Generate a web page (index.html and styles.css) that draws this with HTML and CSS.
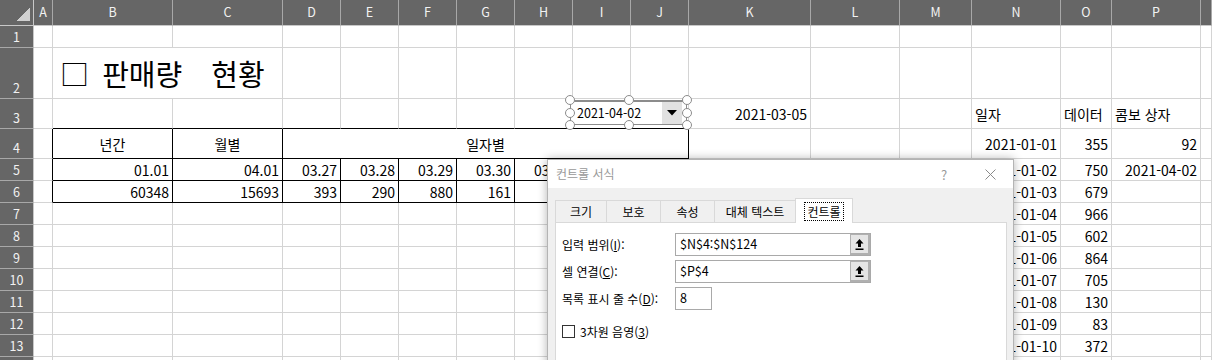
FILE: index.html
```html
<!DOCTYPE html>
<html lang="ko">
<head>
<meta charset="UTF-8">
<title>판매량 현황</title>
<link rel="stylesheet" href="styles.css">
</head>
<body>

<div class="sheet">
  <!-- 열 머리글 -->
  <div class="corner"></div>
  <div class="ch">A</div><div class="ch">B</div><div class="ch">C</div><div class="ch">D</div><div class="ch">E</div><div class="ch">F</div><div class="ch">G</div><div class="ch">H</div>
  <div class="ch">I</div><div class="ch">J</div><div class="ch">K</div><div class="ch">L</div><div class="ch">M</div><div class="ch">N</div><div class="ch">O</div><div class="ch">P</div><div class="ch"></div>

  <!-- 1 -->
  <div class="rh">1</div>
  <div></div><div></div><div></div><div></div><div></div><div></div><div></div><div></div><div></div><div></div><div></div><div></div><div></div><div></div><div></div><div></div><div></div>

  <!-- 2 -->
  <div class="rh">2</div>
  <div></div>
  <div class="title"><span><span class="title-box">□</span> 판매량 <span class="title-sub">현황</span></span></div>
  <div></div><div></div><div></div><div></div><div></div><div></div><div></div><div></div><div></div><div></div><div></div><div></div><div></div>
  <div></div>

  <!-- 3 -->
  <div class="rh">3</div>
  <div></div>
  <div class="tt"></div><div class="tt"></div><div class="tt"></div><div class="tt"></div><div class="tt"></div><div class="tt"></div><div class="tt"></div><div class="tt"></div><div class="tt"></div>
  <div class="r">2021-03-05</div>
  <div></div><div></div>
  <div>일자</div>
  <div>데이터</div>
  <div>콤보 상자</div>
  <div></div>

  <!-- 4 -->
  <div class="rh">4</div>
  <div class="tl"></div>
  <div class="tb c">년간</div>
  <div class="tb c">월별</div>
  <div class="tb c span7">일자별</div>
  <div></div><div></div><div></div>
  <div class="r">2021-01-01</div>
  <div class="r">355</div>
  <div class="r">92</div>
  <div></div>

  <!-- 5 -->
  <div class="rh">5</div>
  <div class="tl"></div>
  <div class="tb r">01.01</div>
  <div class="tb r">04.01</div>
  <div class="tb r">03.27</div>
  <div class="tb r">03.28</div>
  <div class="tb r">03.29</div>
  <div class="tb r">03.30</div>
  <div class="tb r">03.31</div>
  <div class="tb r"></div>
  <div class="tb r"></div>
  <div></div><div></div><div></div>
  <div class="r">2021-01-02</div>
  <div class="r">750</div>
  <div class="r">2021-04-02</div>
  <div></div>

  <!-- 6 -->
  <div class="rh">6</div>
  <div class="tl"></div>
  <div class="tb r">60348</div>
  <div class="tb r">15693</div>
  <div class="tb r">393</div>
  <div class="tb r">290</div>
  <div class="tb r">880</div>
  <div class="tb r">161</div>
  <div class="tb r"></div>
  <div class="tb r"></div>
  <div class="tb r"></div>
  <div></div><div></div><div></div>
  <div class="r">2021-01-03</div>
  <div class="r">679</div>
  <div></div>
  <div></div>

  <!-- 7 ~ 14 -->
  <div class="rh">7</div>
  <div></div><div></div><div></div><div></div><div></div><div></div><div></div><div></div><div></div><div></div><div></div><div></div><div></div>
  <div class="r">2021-01-04</div><div class="r">966</div><div></div><div></div>

  <div class="rh">8</div>
  <div></div><div></div><div></div><div></div><div></div><div></div><div></div><div></div><div></div><div></div><div></div><div></div><div></div>
  <div class="r">2021-01-05</div><div class="r">602</div><div></div><div></div>

  <div class="rh">9</div>
  <div></div><div></div><div></div><div></div><div></div><div></div><div></div><div></div><div></div><div></div><div></div><div></div><div></div>
  <div class="r">2021-01-06</div><div class="r">864</div><div></div><div></div>

  <div class="rh">10</div>
  <div></div><div></div><div></div><div></div><div></div><div></div><div></div><div></div><div></div><div></div><div></div><div></div><div></div>
  <div class="r">2021-01-07</div><div class="r">705</div><div></div><div></div>

  <div class="rh">11</div>
  <div></div><div></div><div></div><div></div><div></div><div></div><div></div><div></div><div></div><div></div><div></div><div></div><div></div>
  <div class="r">2021-01-08</div><div class="r">130</div><div></div><div></div>

  <div class="rh">12</div>
  <div></div><div></div><div></div><div></div><div></div><div></div><div></div><div></div><div></div><div></div><div></div><div></div><div></div>
  <div class="r">2021-01-09</div><div class="r">83</div><div></div><div></div>

  <div class="rh">13</div>
  <div></div><div></div><div></div><div></div><div></div><div></div><div></div><div></div><div></div><div></div><div></div><div></div><div></div>
  <div class="r">2021-01-10</div><div class="r">372</div><div></div><div></div>

  <div class="rh"></div>
  <div></div><div></div><div></div><div></div><div></div><div></div><div></div><div></div><div></div><div></div><div></div><div></div><div></div>
  <div></div><div></div><div></div><div></div>
</div>

<!-- 콤보 상자 (선택됨) -->
<div class="combo">
  <div class="combo-box">
    <span class="combo-value">2021-04-02</span>
    <span class="combo-btn">
      <svg width="10" height="6" viewBox="0 0 10 6"><polygon points="0,0 10,0 5,5.5" fill="#000"/></svg>
    </span>
  </div>
  <i class="handle h-tl"></i><i class="handle h-tm"></i><i class="handle h-tr"></i>
  <i class="handle h-ml"></i><i class="handle h-mr"></i>
  <i class="handle h-bl"></i><i class="handle h-bm"></i><i class="handle h-br"></i>
</div>

<!-- 컨트롤 서식 대화상자 -->
<div class="dialog">
  <div class="dlg-title">
    <span class="dlg-caption">컨트롤 서식</span>
    <span class="dlg-help">?</span>
    <span class="dlg-close">
      <svg width="11" height="11" viewBox="0 0 11 11"><path d="M0.5 0.5 L10.5 10.5 M10.5 0.5 L0.5 10.5" stroke="#8a8a8a" stroke-width="1"/></svg>
    </span>
  </div>

  <div class="dlg-body">
    <div class="tabs">
      <div class="tab t1">크기</div>
      <div class="tab t2">보호</div>
      <div class="tab t3">속성</div>
      <div class="tab t4">대체 텍스트</div>
      <div class="tab t5 active"><span class="focus">컨트롤</span></div>
    </div>

    <div class="panel">
      <div class="field">
        <label>입력 범위(<u>I</u>):</label>
        <div class="ref">
          <span class="ref-text">$N$4:$N$124</span>
          <span class="ref-btn">
            <svg width="9" height="11" viewBox="0 0 9 11"><polygon points="4.5,0 8.5,4.5 6,4.5 6,8 3,8 3,4.5 0.5,4.5" fill="#000"/><rect x="0.5" y="9.5" width="8" height="1.5" fill="#000"/></svg>
          </span>
        </div>
      </div>
      <div class="field">
        <label>셀 연결(<u>C</u>):</label>
        <div class="ref">
          <span class="ref-text">$P$4</span>
          <span class="ref-btn">
            <svg width="9" height="11" viewBox="0 0 9 11"><polygon points="4.5,0 8.5,4.5 6,4.5 6,8 3,8 3,4.5 0.5,4.5" fill="#000"/><rect x="0.5" y="9.5" width="8" height="1.5" fill="#000"/></svg>
          </span>
        </div>
      </div>
      <div class="field">
        <label>목록 표시 줄 수(<u>D</u>):</label>
        <div class="num">8</div>
      </div>
      <div class="check-row">
        <span class="checkbox"></span>
        <span>3차원 음영(<u>3</u>)</span>
      </div>
    </div>
  </div>
</div>

</body>
</html>
```

FILE: styles.css
```css
body {
  margin: 0;
  height: 360px;
  overflow: hidden;
  position: relative;
  background: #fff;
  color: #000;
  font-family: "Noto Sans CJK KR", "Malgun Gothic", sans-serif;
  font-size: 14px;
}

/* 시트 격자 */
.sheet {
  display: grid;
  grid-template-columns: 34px 19px 120px 110px repeat(7, 58px) 122px 89px 72px 89px 51px 89px 1fr;
  grid-template-rows: 26px 22px 51px 30px 30px repeat(10, 22px);
}

.sheet > div {
  box-sizing: border-box;
  display: flex;
  align-items: center;
  padding: 0 3px;
  border-right: 1px solid #d4d4d4;
  border-bottom: 1px solid #d4d4d4;
  white-space: nowrap;
  line-height: 1;
}

.sheet > .r { justify-content: flex-end; }
.sheet > .c { justify-content: center; }

/* 머리글 */
.sheet > .corner {
  background: #666 linear-gradient(to bottom right, transparent 50%, #d0d0d0 50%) no-repeat right 3px bottom 4px / 14px 14px;
  border-right-color: #c8c8c8;
  border-bottom-color: #c8c8c8;
}

.sheet > .ch {
  background: #666;
  color: #f2f2f2;
  font-size: 12.5px;
  justify-content: center;
  border-right-color: #a8a8a8;
  border-bottom-color: #c8c8c8;
}

.sheet > .rh {
  background: #666;
  color: #f2f2f2;
  font-size: 12.5px;
  justify-content: center;
  align-items: flex-end;
  padding-bottom: 4px;
  border-right-color: #c8c8c8;
  border-bottom-color: #a8a8a8;
}

/* 제목 */
.sheet > .title {
  grid-column: span 2;
  font-size: 29px;
  padding-left: 7px;
  padding-top: 1px;
}

.title-box {
  margin-right: 5px;
}

.title-sub {
  margin-left: 21px;
}

/* 표 테두리 */
.sheet > .tb {
  border-right-color: #000;
  border-bottom-color: #000;
}

.sheet > .tl { border-right-color: #000; }
.sheet > .tt { border-bottom-color: #000; }
.sheet > .span7 { grid-column: span 7; }

/* 콤보 상자 */
.combo {
  position: absolute;
  left: 570px;
  top: 100px;
  width: 117px;
  height: 25px;
  box-sizing: border-box;
  border: 1px solid #8c8c8c;
  border-top-width: 2px;
}

.combo-box {
  display: flex;
  align-items: center;
  height: 100%;
  background: #fff;
  padding-left: 6px;
  font-size: 12.5px;
  line-height: 1;
}

.combo-value { flex: 1; }

.combo-btn {
  align-self: stretch;
  width: 20px;
  margin-right: 4px;
  background: #e1e1e1;
  display: flex;
  align-items: center;
  justify-content: center;
}

.handle {
  position: absolute;
  box-sizing: border-box;
  width: 10px;
  height: 10px;
  border: 1.5px solid #8c8c8c;
  border-radius: 50%;
  background: #fff;
}

.h-tl { left: -6px; top: -7px; }
.h-tm { left: calc(50% - 5px); top: -7px; }
.h-tr { right: -6px; top: -7px; }
.h-ml { left: -6px; top: calc(50% - 5px); }
.h-mr { right: -6px; top: calc(50% - 5px); }
.h-bl { left: -6px; bottom: -6px; }
.h-bm { left: calc(50% - 5px); bottom: -6px; }
.h-br { right: -6px; bottom: -6px; }

/* 대화상자 */
.dialog {
  position: absolute;
  left: 547px;
  top: 159px;
  width: 467px;
  height: 240px;
  box-sizing: border-box;
  background: #f0f0f0;
  border: 1px solid #b4b4b4;
  box-shadow: 0 0 9px rgba(0, 0, 0, 0.3);
  font-size: 12px;
  line-height: 1;
}

.dlg-title {
  height: 28px;
  display: flex;
  align-items: center;
  background: #fff;
  color: #999;
  padding-left: 8px;
}

.dlg-caption { flex: 1; }

.dlg-help {
  width: 46px;
  text-align: center;
  font-size: 13px;
}

.dlg-close {
  width: 46px;
  display: flex;
  justify-content: center;
}

.dlg-body {
  padding: 10px 6px 0 7px;
}

.tabs {
  display: flex;
  align-items: flex-end;
  height: 24px;
}

.tab {
  box-sizing: border-box;
  height: 22px;
  margin-right: -1px;
  border: 1px solid #d9d9d9;
  border-bottom: none;
  background: #f0f0f0;
  display: flex;
  align-items: center;
  justify-content: center;
}

.t1 { width: 52px; }
.t2 { width: 55px; }
.t3 { width: 55px; }
.t4 { width: 82px; }
.t5 { width: 58px; }

.tab.active {
  height: 25px;
  margin-bottom: -1px;
  background: #fff;
  position: relative;
  z-index: 1;
}

.focus {
  border: 1px dotted #000;
  padding: 3px 2px 2px;
}

.panel {
  box-sizing: border-box;
  width: 452px;
  height: 200px;
  background: #fff;
  border: 1px solid #d9d9d9;
  padding: 10px 6px;
}

.field {
  display: flex;
  align-items: center;
  height: 23px;
  margin-bottom: 4px;
}

.field label {
  width: 113px;
}

.ref {
  box-sizing: border-box;
  width: 196px;
  height: 23px;
  display: flex;
  border: 1px solid #a9a9a9;
}

.ref-text {
  flex: 1;
  display: flex;
  align-items: center;
  padding-left: 4px;
  font-size: 12.5px;
}

.ref-btn {
  box-sizing: border-box;
  width: 20px;
  background: #e5e5e5;
  border: 1px solid #b0b0b0;
  border-right-width: 2px;
  border-bottom-width: 2px;
  display: flex;
  align-items: center;
  justify-content: center;
}

.num {
  box-sizing: border-box;
  width: 37px;
  height: 23px;
  border: 1px solid #a9a9a9;
  display: flex;
  align-items: center;
  padding-left: 4px;
  font-size: 12.5px;
}

.check-row {
  display: flex;
  align-items: center;
  gap: 5px;
  margin-top: 15px;
}

.checkbox {
  box-sizing: border-box;
  width: 13px;
  height: 13px;
  border: 1px solid #333;
  background: #fff;
}
```
